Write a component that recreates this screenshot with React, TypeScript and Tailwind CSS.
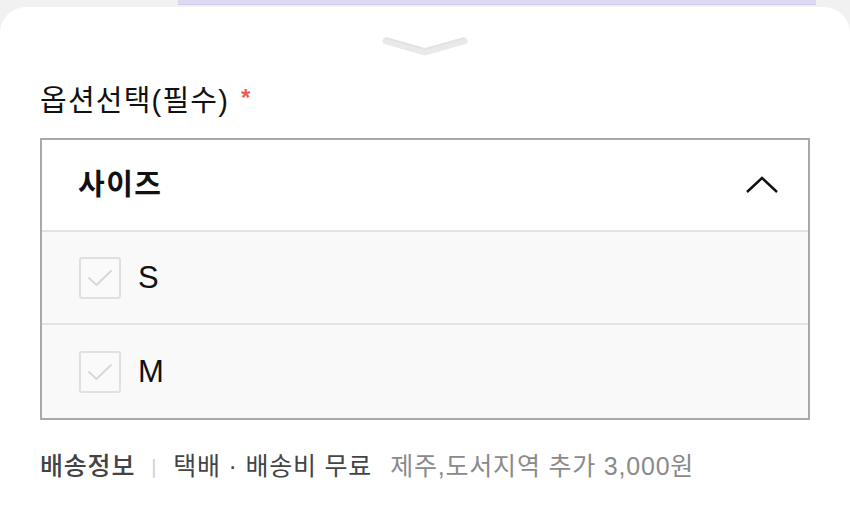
const FONT = { fontFamily: '"Liberation Sans", "Noto Sans CJK KR", sans-serif' };

function OptionRow({ label, last }: { label: string; last?: boolean }) {
  return (
    <div className={`h-[93px] flex items-center pl-[37px] bg-[#f9f9f9] ${last ? '' : 'border-b-2 border-[#e3e3e3]'}`}>
      <div className="w-[42px] h-[42px] border-2 border-[#e0e0e0] rounded-[3px] bg-[#fafafa] flex items-center justify-center">
        <svg width="28" height="22" viewBox="0 0 28 22">
          <path d="M3 11 L10.5 18 L25 4" fill="none" stroke="#d6d6d6" strokeWidth="1.8" strokeLinecap="round" strokeLinejoin="round" />
        </svg>
      </div>
      <span className="ml-[17px] text-[31px] text-[#111] leading-none">{label}</span>
    </div>
  );
}

export default function App() {
  return (
    <div className="w-[850px] h-[513px] bg-[#f1f1f1] overflow-hidden" style={FONT}>
      <div className="h-[7px] relative">
        <div className="absolute left-[178px] w-[638px] top-0 h-[5px] bg-[#dcd9f1] border-b border-[#cfc9ee]" />
      </div>
      <div className="bg-white rounded-t-[26px] h-[506px] px-[40px]">
        <div className="flex justify-center pt-[26px] h-[52px]">
          <svg width="90" height="24" viewBox="0 0 90 24">
            <path d="M6 8 L45 19 L84 8" fill="none" stroke="#e9e9e9" strokeWidth="7" strokeLinecap="round" strokeLinejoin="round" />
            <path d="M6 5 L45 16 L84 5" fill="none" stroke="#dedede" strokeWidth="2" strokeLinecap="round" strokeLinejoin="round" opacity="0.7" />
          </svg>
        </div>
        <div className="flex items-center mt-[22px] h-[40px]">
          <span className="text-[29px] text-[#111] leading-none tracking-[1.2px]">옵션선택(필수)</span>
          <span className="ml-[12px] text-[24px] text-[#ec5a50] font-bold leading-none -mt-[6px]">*</span>
        </div>
        <div className="mt-[17px] border-2 border-[#a9a9a9]">
          <div className="h-[92px] flex items-center justify-between pl-[36px] pr-[29px] bg-white border-b-2 border-[#e3e3e3]">
            <span className="text-[29px] font-bold text-[#111] leading-none tracking-[1.5px]">사이즈</span>
            <svg width="34" height="20" viewBox="0 0 34 20">
              <path d="M2 17 L17 3 L32 17" fill="none" stroke="#111" strokeWidth="2.4" />
            </svg>
          </div>
          <OptionRow label="S" />
          <OptionRow label="M" last />
        </div>
        <div className="flex items-center mt-[34px] text-[25px] leading-none tracking-[0.8px]">
          <span className="text-[#444] font-medium">배송정보</span>
          <span className="mx-[16px] text-[#d0d0d0] text-[20px]">|</span>
          <span className="text-[#444]">택배 · 배송비 무료</span>
          <span className="ml-[18px] text-[#8a8a8a]">제주,도서지역 추가 3,000원</span>
        </div>
      </div>
    </div>
  );
}
